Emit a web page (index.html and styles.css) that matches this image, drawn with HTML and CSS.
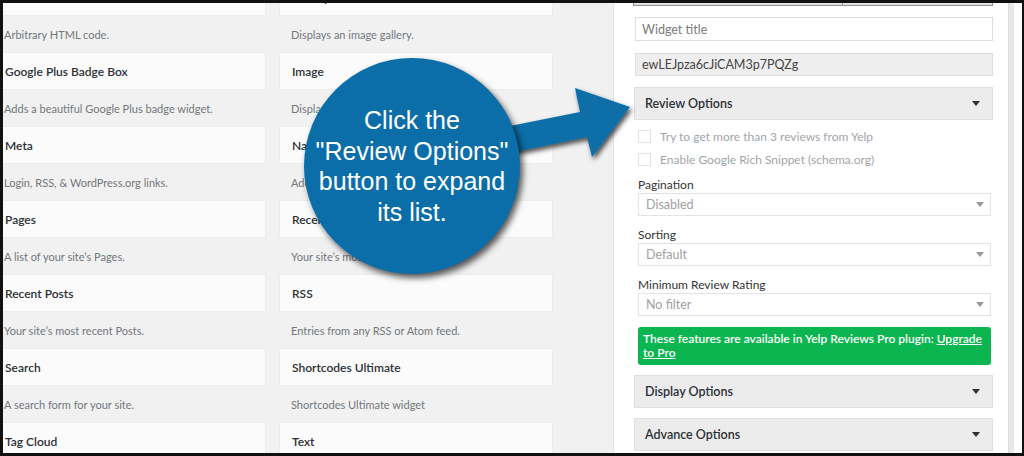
FILE: index.html
```html
<!DOCTYPE html>
<html>

<head>
    <title>Widgets - Yelp Reviews</title>
    <link rel="stylesheet" href="styles.css">
</head>

<body>
    <div class="frame">
        <div class="widgets">
            <div class="widget"><div class="card">Custom HTML</div><p class="desc">Arbitrary HTML code.</p></div>
            <div class="widget"><div class="card">Gallery</div><p class="desc">Displays an image gallery.</p></div>
            <div class="widget"><div class="card">Google Plus Badge Box</div><p class="desc">Adds a beautiful Google Plus badge widget.</p></div>
            <div class="widget"><div class="card">Image</div><p class="desc">Displays an image.</p></div>
            <div class="widget"><div class="card">Meta</div><p class="desc">Login, RSS, &amp; WordPress.org links.</p></div>
            <div class="widget"><div class="card">Navigation Menu</div><p class="desc">Add a navigation menu to your sidebar.</p></div>
            <div class="widget"><div class="card">Pages</div><p class="desc">A list of your site’s Pages.</p></div>
            <div class="widget"><div class="card">Recent Comments</div><p class="desc">Your site’s most recent comments.</p></div>
            <div class="widget"><div class="card">Recent Posts</div><p class="desc">Your site’s most recent Posts.</p></div>
            <div class="widget"><div class="card">RSS</div><p class="desc">Entries from any RSS or Atom feed.</p></div>
            <div class="widget"><div class="card">Search</div><p class="desc">A search form for your site.</p></div>
            <div class="widget"><div class="card">Shortcodes Ultimate</div><p class="desc">Shortcodes Ultimate widget</p></div>
            <div class="widget"><div class="card">Tag Cloud</div><p class="desc">A cloud of your most used tags.</p></div>
            <div class="widget"><div class="card">Text</div><p class="desc">Arbitrary text.</p></div>
        </div>

        <div class="panel">
            <div class="topbar"><span></span><span></span></div>
            <input class="field" type="text" placeholder="Widget title">
            <input class="field locked" type="text" value="ewLEJpza6cJiCAM3p7PQZg" disabled>

            <div class="toggle">Review Options <span class="caret"></span></div>
            <div class="options">
                <label class="check"><span class="box"></span>Try to get more than 3 reviews from Yelp</label>
                <label class="check"><span class="box"></span>Enable Google Rich Snippet (schema.org)</label>

                <div class="label first">Pagination</div>
                <div class="select">Disabled <span class="caret light"></span></div>
                <div class="label">Sorting</div>
                <div class="select">Default <span class="caret light"></span></div>
                <div class="label">Minimum Review Rating</div>
                <div class="select">No filter <span class="caret light"></span></div>

                <div class="notice">These features are available in Yelp Reviews Pro plugin: <a href="#">Upgrade to Pro</a></div>
            </div>

            <div class="toggle spaced">Display Options <span class="caret"></span></div>
            <div class="toggle spaced">Advance Options <span class="caret"></span></div>
        </div>
        <div class="edge"></div>

        <!-- callout over the screenshot -->
        <svg class="arrow" width="160" height="90" viewBox="500 80 160 90">
            <defs>
                <filter id="shade" x="-20%" y="-20%" width="150%" height="160%">
                    <feDropShadow dx="2" dy="3" stdDeviation="2.5" flood-color="#000" flood-opacity="0.7"/>
                </filter>
            </defs>
            <polygon filter="url(#shade)" fill="#0c6ea8"
                points="505,127 580,112 575,88 630,107 592,157 587,137 510,153"/>
        </svg>
        <div class="callout">
            <p>Click the<br>"Review Options"<br>button to expand<br>its list.</p>
        </div>
    </div>
</body>

</html>
```

FILE: styles.css
```css
body {
    margin: 0;
    background: #fff;
}

.frame {
    position: relative;
    display: flex;
    align-items: flex-start;
    width: 1024px;
    height: 456px;
    box-sizing: border-box;
    border: 3px solid #111;
    border-right-width: 2px;
    background-color: #f1f1f1;
    overflow: hidden;
    font-family: Lato, "Liberation Sans", sans-serif;
}

/* Available widgets list */
.widgets {
    display: grid;
    grid-template-columns: 274px 274px;
    column-gap: 13px;
    margin: -25px 0 0 -11px;
    flex-shrink: 0;
}

.card {
    display: flex;
    align-items: center;
    height: 38px;
    box-sizing: border-box;
    padding: 0 12px;
    background-color: #fbfbfb;
    border: 1px solid #ececec;
    color: #2b3035;
    font-size: 12px;
    font-weight: 600;
}

.desc {
    display: flex;
    align-items: center;
    height: 36px;
    margin: 0;
    padding: 0 12px;
    color: #72777c;
    font-size: 11px;
}

/* Widget form */
.panel {
    width: 396px;
    height: 450px;
    box-sizing: border-box;
    margin-left: 60px;
    padding: 0 15px 0 21px;
    background-color: #fff;
    border-left: 1px solid #e2e2e2;
    border-right: 1px solid #dcdcdc;
    flex-shrink: 0;
}

.edge {
    flex: 1;
    height: 100%;
    border-left: 5px solid #e8e8e8;
    background-color: #fff;
}

.topbar {
    display: flex;
    height: 2px;
    margin: 0 0 0 -2px;
    background-color: #e2e2e2;
    border: 1px solid #8f8f8f;
    border-top: 0;
}

.topbar span:first-child {
    width: 208px;
    border-right: 1px solid #8f8f8f;
}

.field {
    display: block;
    width: 100%;
    height: 24px;
    box-sizing: border-box;
    margin: 11px 0 0;
    padding: 0 6px;
    border: 1px solid #ddd;
    background: #fff;
    font-family: inherit;
    font-size: 12.5px;
    color: #32373c;
}

.field::placeholder {
    color: #7a7a7a;
}

.field.locked {
    height: 23px;
    margin-top: 12px;
    background-color: #eee;
    color: #444;
}

.toggle {
    display: flex;
    align-items: center;
    justify-content: space-between;
    height: 33px;
    box-sizing: border-box;
    margin: 11px 0 0 -1px;
    padding: 0 12px 0 10px;
    background-color: #ececec;
    border: 1px solid #e0e0e0;
    color: #2b3035;
    font-size: 12.5px;
    font-weight: 600;
}

.toggle.spaced {
    margin-top: 10px;
}

.caret {
    width: 0;
    height: 0;
    border-left: 4px solid transparent;
    border-right: 4px solid transparent;
    border-top: 5px solid #2f2f2f;
}

.caret.light {
    border-top-color: #999;
}

.options {
    margin: 5px 2px 0 3px;
}

.check {
    display: flex;
    align-items: center;
    height: 23px;
    color: #a0a5aa;
    font-size: 12px;
}

.box {
    width: 13px;
    height: 13px;
    box-sizing: border-box;
    margin-right: 9px;
    border: 1px solid #e3e3e3;
    background: #fff;
}

.label {
    height: 16px;
    line-height: 16px;
    margin-top: 11px;
    color: #333;
    font-size: 12px;
}

.label.first {
    margin-top: 6px;
}

.select {
    display: flex;
    align-items: center;
    justify-content: space-between;
    height: 23px;
    box-sizing: border-box;
    padding: 0 6px 0 7px;
    border: 1px solid #e3e3e3;
    color: #a0a0a0;
    font-size: 12.5px;
}

.notice {
    margin-top: 11px;
    height: 38px;
    box-sizing: border-box;
    padding: 5px 6px 0 5px;
    background-color: #0bb54f;
    border-radius: 3px;
    color: #fff;
    font-size: 12px;
    font-weight: 600;
    line-height: 14px;
}

.notice a {
    color: #fff;
}

/* Blue callout */
.callout {
    position: absolute;
    left: 301px;
    top: 55px;
    width: 216px;
    height: 216px;
    display: flex;
    align-items: center;
    justify-content: center;
    border-radius: 50%;
    background-color: #0c6ea8;
    box-shadow: 3px 4px 6px rgba(0, 0, 0, 0.65);
}

.callout p {
    margin: 0;
    color: #fff;
    font-family: "Liberation Sans", Arial, sans-serif;
    font-size: 25px;
    line-height: 30.5px;
    text-align: center;
}

.arrow {
    position: absolute;
    left: 497px;
    top: 77px;
}
```
